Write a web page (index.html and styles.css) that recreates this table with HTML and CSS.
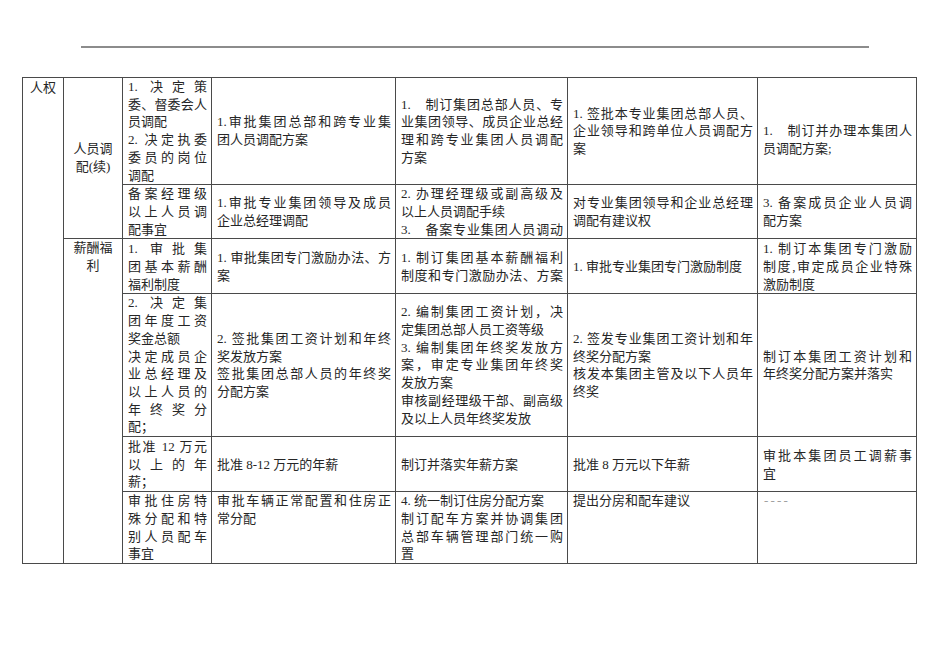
FILE: index.html
```html
<!DOCTYPE html>
<html lang="zh-CN">
<head>
<meta charset="utf-8">
<title>人权 - 权限表</title>
<link rel="stylesheet" href="styles.css">
</head>
<body>
<div class="page">
  <div class="rule"></div>
  <table class="grid">
    <colgroup>
      <col class="c1"><col class="c2"><col class="c3"><col class="c4"><col class="c5"><col class="c6"><col class="c7">
    </colgroup>
    <tr class="r1">
      <td class="cat" rowspan="6">人权</td>
      <td class="sub" rowspan="2"><span class="ln">人员调</span><span class="ln">配(续)</span></td>
      <td>
        <span class="ln j">1. 决定策</span>
        <span class="ln j">委、督委会人</span>
        <span class="ln">员调配</span>
        <span class="ln j">2. 决定执委</span>
        <span class="ln j">委员的岗位</span>
        <span class="ln">调配</span>
      </td>
      <td>
        <span class="ln j">1.审批集团总部和跨专业集</span>
        <span class="ln">团人员调配方案</span>
      </td>
      <td>
        <span class="ln j">1.　制订集团总部人员、专</span>
        <span class="ln j">业集团领导、成员企业总经</span>
        <span class="ln j">理和跨专业集团人员调配</span>
        <span class="ln">方案</span>
      </td>
      <td>
        <span class="ln j">1. 签批本专业集团总部人员、</span>
        <span class="ln j">企业领导和跨单位人员调配方</span>
        <span class="ln">案</span>
      </td>
      <td>
        <span class="ln">&nbsp;</span>
        <span class="ln j">1.　制订并办理本集团人</span>
        <span class="ln">员调配方案;</span>
      </td>
    </tr>
    <tr class="r2">
      <td>
        <span class="ln j">备案经理级</span>
        <span class="ln j">以上人员调</span>
        <span class="ln">配事宜</span>
      </td>
      <td>
        <span class="ln j">1.审批专业集团领导及成员</span>
        <span class="ln">企业总经理调配</span>
      </td>
      <td>
        <span class="ln j">2. 办理经理级或副高级及</span>
        <span class="ln">以上人员调配手续</span>
        <span class="ln j">3.　备案专业集团人员调动</span>
      </td>
      <td>
        <span class="ln j">对专业集团领导和企业总经理</span>
        <span class="ln">调配有建议权</span>
      </td>
      <td>
        <span class="ln j">3. 备案成员企业人员调</span>
        <span class="ln">配方案</span>
      </td>
    </tr>
    <tr class="r3">
      <td class="sub top" rowspan="4"><span class="ln">薪酬福</span><span class="ln">利</span></td>
      <td>
        <span class="ln j">1. 审批集</span>
        <span class="ln j">团基本薪酬</span>
        <span class="ln">福利制度</span>
      </td>
      <td>
        <span class="ln j">1. 审批集团专门激励办法、方</span>
        <span class="ln">案</span>
      </td>
      <td>
        <span class="ln j">1. 制订集团基本薪酬福利</span>
        <span class="ln j">制度和专门激励办法、方案</span>
      </td>
      <td>
        <span class="ln">1. 审批专业集团专门激励制度</span>
      </td>
      <td>
        <span class="ln j">1. 制订本集团专门激励</span>
        <span class="ln j">制度,审定成员企业特殊</span>
        <span class="ln">激励制度</span>
      </td>
    </tr>
    <tr class="r4">
      <td>
        <span class="ln j">2. 决定集</span>
        <span class="ln j">团年度工资</span>
        <span class="ln">奖金总额</span>
        <span class="ln j">决定成员企</span>
        <span class="ln j">业总经理及</span>
        <span class="ln j">以上人员的</span>
        <span class="ln j">年终奖分</span>
        <span class="ln">配；</span>
      </td>
      <td>
        <span class="ln j">2. 签批集团工资计划和年终</span>
        <span class="ln">奖发放方案</span>
        <span class="ln j">签批集团总部人员的年终奖</span>
        <span class="ln">分配方案</span>
      </td>
      <td>
        <span class="ln j">2. 编制集团工资计划，决</span>
        <span class="ln">定集团总部人员工资等级</span>
        <span class="ln j">3. 编制集团年终奖发放方</span>
        <span class="ln j">案，审定专业集团年终奖</span>
        <span class="ln">发放方案</span>
        <span class="ln j">审核副经理级干部、副高级</span>
        <span class="ln">及以上人员年终奖发放</span>
      </td>
      <td>
        <span class="ln j">2. 签发专业集团工资计划和年</span>
        <span class="ln">终奖分配方案</span>
        <span class="ln j">核发本集团主管及以下人员年</span>
        <span class="ln">终奖</span>
      </td>
      <td>
        <span class="ln j">制订本集团工资计划和</span>
        <span class="ln">年终奖分配方案并落实</span>
      </td>
    </tr>
    <tr class="r5">
      <td>
        <span class="ln j">批准 12 万元</span>
        <span class="ln j">以上的年</span>
        <span class="ln">薪；</span>
      </td>
      <td><span class="ln">批准 8-12 万元的年薪</span></td>
      <td><span class="ln">制订并落实年薪方案</span></td>
      <td><span class="ln">批准 8 万元以下年薪</span></td>
      <td>
        <span class="ln j">审批本集团员工调薪事</span>
        <span class="ln">宜</span>
      </td>
    </tr>
    <tr class="r6">
      <td class="top">
        <span class="ln j">审批住房特</span>
        <span class="ln j">殊分配和特</span>
        <span class="ln j">别人员配车</span>
        <span class="ln">事宜</span>
      </td>
      <td class="top">
        <span class="ln j">审批车辆正常配置和住房正</span>
        <span class="ln">常分配</span>
      </td>
      <td class="top">
        <span class="ln">4. 统一制订住房分配方案</span>
        <span class="ln j">制订配车方案并协调集团</span>
        <span class="ln j">总部车辆管理部门统一购</span>
        <span class="ln">置</span>
      </td>
      <td class="top"><span class="ln">提出分房和配车建议</span></td>
      <td class="top"><span class="ln dash">----</span></td>
    </tr>
  </table>
</div>
</body>
</html>
```

FILE: styles.css
```css
html, body {
  margin: 0;
  padding: 0;
  background: #ffffff;
}

.page {
  padding-top: 46px;
  font-family: "Liberation Serif", "Noto Sans CJK SC", serif;
  font-size: 13px;
  line-height: 17.7px;
  color: #262626;
}

.rule {
  width: 788px;
  height: 2px;
  margin-left: 81px;
  background: #8c8c8c;
}

.grid {
  margin: 29px 0 0 22px;
  width: 894px;
  table-layout: fixed;
  border-collapse: collapse;
}

.c1 { width: 41px; }
.c2 { width: 59px; }
.c3 { width: 89px; }
.c4 { width: 184px; }
.c5 { width: 172px; }
.c6 { width: 190px; }
.c7 { width: 159px; }

.grid td {
  border: 1px solid #4a4a4a;
  padding: 0 4px 0 5px;
  vertical-align: middle;
  text-align: left;
}

.r3 td, .r5 td {
  padding-top: 1px;
}

.grid td.cat {
  vertical-align: top;
  text-align: center;
  padding: 1px 2px 0;
}

.grid td.sub {
  text-align: center;
  padding: 0 2px;
}

.grid td.top {
  vertical-align: top;
}

.ln {
  display: block;
}

.j {
  text-align: justify;
  text-align-last: justify;
}

.dash {
  color: #a0a0a0;
  letter-spacing: 2.2px;
  padding-left: 1px;
}
```
